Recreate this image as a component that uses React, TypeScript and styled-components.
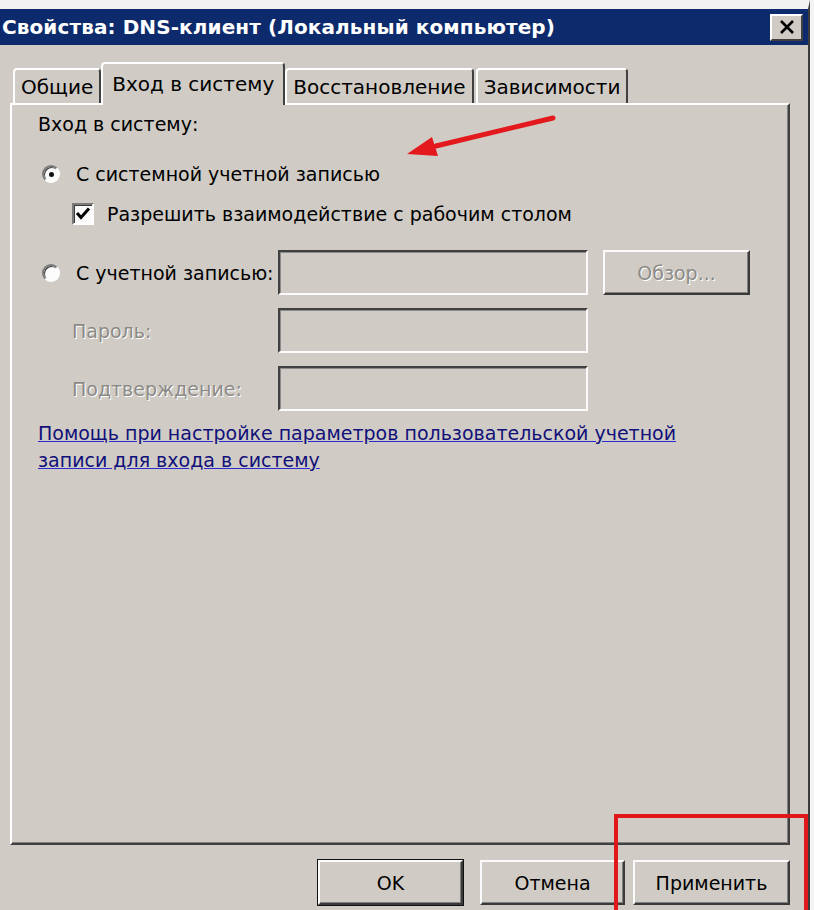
import React from 'react';
import styled, { createGlobalStyle } from 'styled-components';

const GlobalStyle = createGlobalStyle`
  html, body {
    margin: 0;
    padding: 0;
    background: #f4f4f4;
  }
  body {
    font-family: "DejaVu Sans", "Liberation Sans", sans-serif;
    color: #000;
  }
`;

const FACE = '#d0ccc5';

const Page = styled.div`
  position: relative;
  width: 814px;
  height: 910px;
  overflow: hidden;
  background: #f4f4f4;
`;

const Dialog = styled.div`
  width: 808px;
  height: 901px;
  border-top: 9px solid #f2f2f2;
  border-right: 2px solid #3c3c3c;
  background: ${FACE};
  display: flex;
  flex-direction: column;
`;

const TitleBar = styled.div`
  height: 36px;
  background: #0c2a6c;
  display: flex;
  align-items: center;
  justify-content: space-between;
  padding: 0 5px 0 2px;
`;

const TitleText = styled.span`
  color: #fff;
  font-weight: 700;
  font-size: 20px;
  letter-spacing: 0.1px;
  white-space: nowrap;
`;

const CloseButton = styled.div`
  width: 29px;
  height: 23px;
  background: ${FACE};
  border: 2px solid;
  border-color: #fff #404040 #404040 #fff;
  display: flex;
  align-items: center;
  justify-content: center;
`;

const Body = styled.div`
  display: flex;
  flex-direction: column;
  padding: 17px 18px 0 10px;
`;

const TabStrip = styled.div`
  display: flex;
  align-items: flex-end;
  height: 41px;
  padding-left: 2px;
  position: relative;
  z-index: 1;
`;

const Tab = styled.div<{ $active?: boolean }>`
  height: ${({ $active }) => ($active ? '43px' : '35px')};
  margin: ${({ $active }) => ($active ? '0 -1px -2px -1px' : '0 1px')};
  box-sizing: border-box;
  padding: ${({ $active }) => ($active ? '0 9px 2px' : '0 6px')};
  background: ${FACE};
  border-top: 2px solid #fff;
  border-left: 2px solid #fff;
  border-right: 2px solid #404040;
  border-radius: 4px 4px 0 0;
  display: flex;
  align-items: center;
  font-size: 20px;
  white-space: nowrap;
`;

const Panel = styled.div`
  height: 742px;
  box-sizing: border-box;
  border: 2px solid;
  border-color: #fff #404040 #404040 #fff;
  box-shadow: inset -1px -1px 0 #808080;
  padding: 4px 0 0 26px;
  display: flex;
  flex-direction: column;
  font-size: 19px;
`;

const Line = styled.div<{ $top: number; $indent?: number }>`
  height: 30px;
  margin-top: ${({ $top }) => $top}px;
  padding-left: ${({ $indent }) => $indent ?? 0}px;
  display: flex;
  align-items: center;
  white-space: nowrap;
`;

const Radio = styled.span<{ $checked?: boolean }>`
  width: 18px;
  height: 18px;
  box-sizing: border-box;
  margin: 0 16px 0 4px;
  border-radius: 50%;
  border: 2px solid;
  border-color: #7a7a7a #fff #fff #7a7a7a;
  background: #fbfbfb;
  box-shadow: inset 1px 1px 0 #3c3c3c;
  display: flex;
  align-items: center;
  justify-content: center;
  flex: none;

  &::after {
    content: '';
    width: 5px;
    height: 5px;
    border-radius: 50%;
    background: #111;
    display: ${({ $checked }) => ($checked ? 'block' : 'none')};
  }
`;

const Check = styled.span`
  width: 22px;
  height: 22px;
  box-sizing: border-box;
  margin-right: 13px;
  border: 2px solid;
  border-color: #7a7a7a #fff #fff #7a7a7a;
  box-shadow: inset 1px 1px 0 #3c3c3c;
  background: #fbfbfb;
  display: flex;
  align-items: center;
  justify-content: center;
  flex: none;
`;

const AccountGrid = styled.div`
  margin-top: 21px;
  display: grid;
  grid-template-columns: 240px 310px 162px;
  grid-auto-rows: 45px;
  row-gap: 13px;
  align-items: center;
`;

const Cell = styled.div<{ $indent?: number }>`
  display: flex;
  align-items: center;
  padding-left: ${({ $indent }) => $indent ?? 0}px;
  white-space: nowrap;
`;

const Disabled = styled.span`
  color: #8c8a86;
  text-shadow: 1px 1px 0 #fff;
`;

const Field = styled.div`
  height: 45px;
  box-sizing: border-box;
  border: 2px solid;
  border-color: #404040 #fbfbfb #fbfbfb #404040;
  box-shadow: inset 1px 1px 0 #8a8a8a;
  background: ${FACE};
`;

const Button = styled.div<{ $default?: boolean }>`
  height: 45px;
  box-sizing: border-box;
  border: 2px solid;
  border-color: #fbfbfb #3a3a3a #3a3a3a #fbfbfb;
  box-shadow: ${({ $default }) =>
    $default ? '0 0 0 1px #111, inset -1px -1px 0 #808080' : 'inset -1px -1px 0 #808080'};
  background: ${FACE};
  display: flex;
  align-items: center;
  justify-content: center;
  font-size: 19px;
  white-space: nowrap;
`;

const BrowseButton = styled(Button)`
  width: 147px;
  justify-self: end;
`;

const HelpLink = styled.a`
  margin-top: 9px;
  width: 660px;
  line-height: 27px;
  color: #10107a;
  text-decoration: underline;
  text-decoration-color: #2a2ad0;
  cursor: pointer;
`;

const Footer = styled.div`
  display: flex;
  justify-content: flex-end;
  gap: 8px;
  padding-top: 15px;
`;

const FooterButton = styled(Button)<{ $w: number }>`
  width: ${({ $w }) => $w}px;
  margin-right: ${({ $default }) => ($default ? '9px' : '0')};
`;

const ArrowMark = styled.svg`
  position: absolute;
  left: 0;
  top: 0;
  pointer-events: none;
`;

const Highlight = styled.div`
  position: absolute;
  left: 614px;
  top: 814px;
  width: 194px;
  height: 110px;
  box-sizing: border-box;
  border: 4px solid #e0181b;
  pointer-events: none;
`;

export default function App() {
  return (
    <Page>
      <GlobalStyle />
      <Dialog>
        <TitleBar>
          <TitleText>Свойства: DNS-клиент (Локальный компьютер)</TitleText>
          <CloseButton>
            <svg width="16" height="14" viewBox="0 0 16 14">
              <path d="M2 1 L14 13 M14 1 L2 13" stroke="#000" strokeWidth="2.6" />
            </svg>
          </CloseButton>
        </TitleBar>
        <Body>
          <TabStrip>
            <Tab>Общие</Tab>
            <Tab $active>Вход в систему</Tab>
            <Tab>Восстановление</Tab>
            <Tab>Зависимости</Tab>
          </TabStrip>
          <Panel>
            <Line $top={0}>Вход в систему:</Line>
            <Line $top={20}>
              <Radio $checked />С системной учетной записью
            </Line>
            <Line $top={10} $indent={34}>
              <Check>
                <svg width="16" height="14" viewBox="0 0 16 14">
                  <path d="M2 6 L6 10.5 L14 1.5" fill="none" stroke="#000" strokeWidth="3" />
                </svg>
              </Check>
              Разрешить взаимодействие с рабочим столом
            </Line>
            <AccountGrid>
              <Cell>
                <Radio />С учетной записью:
              </Cell>
              <Field />
              <BrowseButton>
                <Disabled>Обзор...</Disabled>
              </BrowseButton>
              <Cell $indent={34}>
                <Disabled>Пароль:</Disabled>
              </Cell>
              <Field />
              <span />
              <Cell $indent={34}>
                <Disabled>Подтверждение:</Disabled>
              </Cell>
              <Field />
              <span />
            </AccountGrid>
            <HelpLink>
              Помощь при настройке параметров пользовательской учетной записи для входа в систему
            </HelpLink>
          </Panel>
          <Footer>
            <FooterButton $w={145} $default>
              OK
            </FooterButton>
            <FooterButton $w={145}>Отмена</FooterButton>
            <FooterButton $w={157}>Применить</FooterButton>
          </Footer>
        </Body>
      </Dialog>
      <ArrowMark width="814" height="910">
        <line x1="553" y1="118" x2="436" y2="146" stroke="#e3191d" strokeWidth="5" strokeLinecap="round" />
        <polygon points="407,154 432,137 438,156" fill="#e3191d" />
      </ArrowMark>
      <Highlight />
    </Page>
  );
}
